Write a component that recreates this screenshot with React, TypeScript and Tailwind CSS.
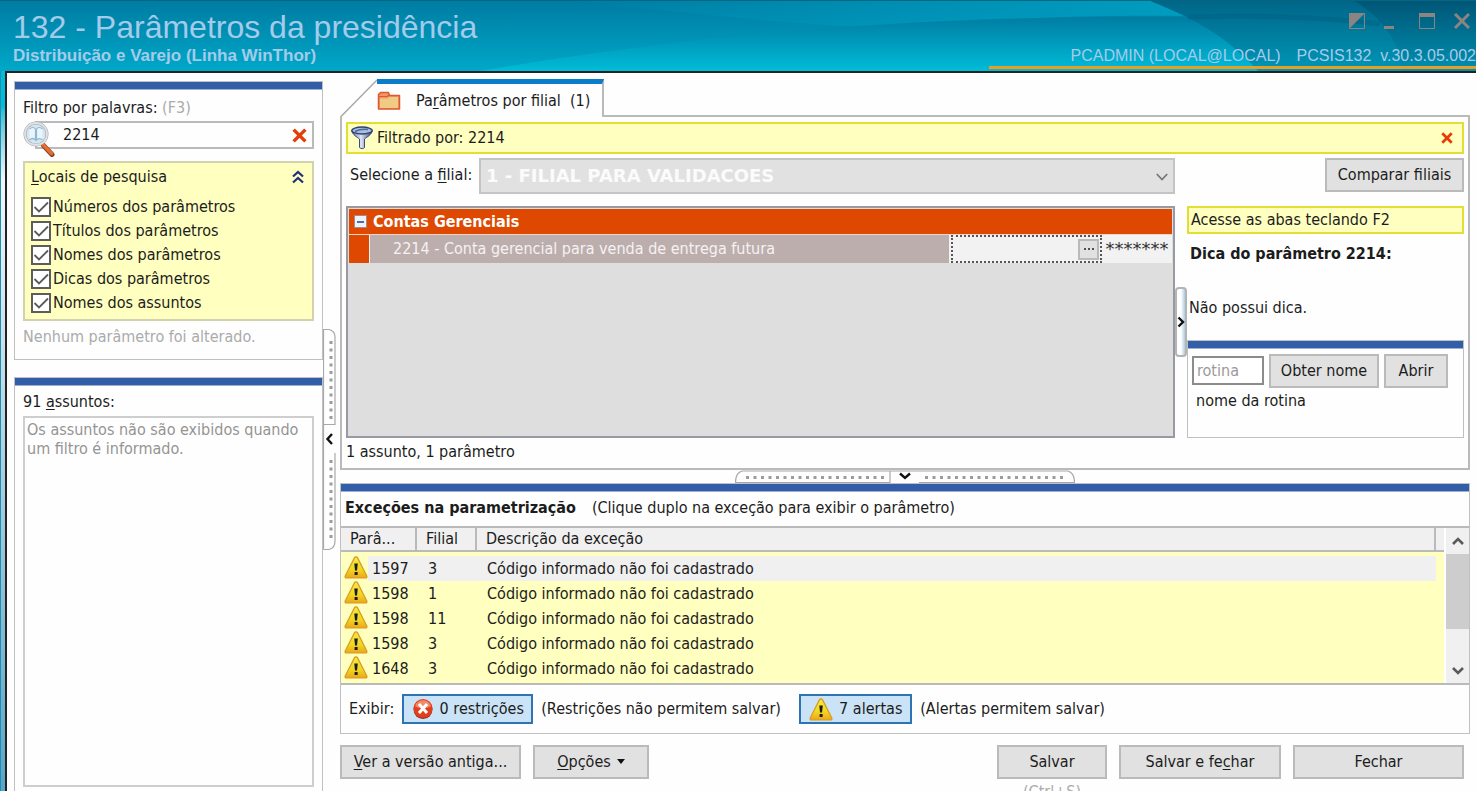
import React from 'react';

const locais = [
  'Números dos parâmetros',
  'Títulos dos parâmetros',
  'Nomes dos parâmetros',
  'Dicas dos parâmetros',
  'Nomes dos assuntos',
];

const excecoes = [
  { parametro: '1597', filial: '3' },
  { parametro: '1598', filial: '1' },
  { parametro: '1598', filial: '11' },
  { parametro: '1598', filial: '3' },
  { parametro: '1648', filial: '3' },
];

const Key: React.FC<{ children: React.ReactNode }> = ({ children }) => (
  <span className="underline underline-offset-2">{children}</span>
);

const Button: React.FC<{ className?: string; children: React.ReactNode }> = ({ className = '', children }) => (
  <button type="button" className={`h-[34px] border-2 border-[#bababa] bg-[#e1e1e1] whitespace-nowrap hover:bg-[#e5f1fb] ${className}`}>
    {children}
  </button>
);

const BlueBar = () => <div className="h-2 shrink-0 border-b border-[#9fb0cc] bg-[#315da9]" />;

const Warning = () => (
  <svg viewBox="0 0 24 23" className="h-[23px] w-6 shrink-0" aria-hidden="true">
    <defs>
      <linearGradient id="warn" x1="0" y1="0" x2="0" y2="1">
        <stop offset="0" stopColor="#f6e84a" />
        <stop offset="0.6" stopColor="#f0d820" />
        <stop offset="1" stopColor="#eda51c" />
      </linearGradient>
    </defs>
    <path d="M12 .8c.7 0 1.200.4 1.600 1.100L22.800 20c.5 1.200 0 2-1.200 2H2.400c-1.200 0-1.700-.8-1.200-2L10.400 1.900c.4-.7.9-1.100 1.600-1.100Z" fill="url(#warn)" stroke="#d89a22" strokeWidth="1.200" />
    <path d="M10.300 7.500h3.500l-.8 7h-2z" fill="#1c1c1c" />
    <rect x="10.600" y="16" width="3" height="3" fill="#1c1c1c" />
  </svg>
);

const RedX: React.FC<{ className: string }> = ({ className }) => (
  <svg viewBox="0 0 14 14" className={className} aria-hidden="true">
    <path d="M1.500 1.500 12.500 12.500M12.500 1.500 1.500 12.500" stroke="#e63c08" strokeWidth="3.200" />
  </svg>
);

const Magnifier = () => (
  <svg viewBox="0 0 34 38" className="absolute -top-[2px] left-0 h-[38px] w-[34px]" aria-hidden="true">
    <path d="M20.500 26.500 29 35.500" stroke="#7a4a2a" strokeWidth="5" strokeLinecap="round" />
    <path d="M20 25.500 28.500 34.500" stroke="#ea6a34" strokeWidth="3.500" strokeLinecap="round" />
    <circle cx="13" cy="15" r="11" fill="#d3e6f2" stroke="#a9abad" strokeWidth="3" />
    <circle cx="13" cy="15" r="11" fill="none" stroke="#dfe1e2" strokeWidth="1.800" />
    <path d="M6.500 10c2-2 4.500-2 6 0v11c-2-2-4-2-6 0M19.500 10c-2-2-4.500-2-6 0v11c2-2 4-2 6 0" fill="#e9f4fb" stroke="#8fb8d2" strokeWidth="1.200" />
  </svg>
);

const Folder = () => (
  <svg viewBox="0 0 24 20" className="h-5 w-6" aria-hidden="true">
    <path d="M1.500 3.500V18h21V4.500H12.500L11.500 1.500H3.500z" fill="#e99a66" stroke="#e4572e" strokeWidth="1.500" strokeLinejoin="round" />
    <path d="M3 7.500h7.500l2-1.500h8.500v11H3z" fill="#f0cb86" />
    <path d="M2 5.500h8l2.500-1.500" fill="none" stroke="#e4572e" strokeWidth="1.200" />
  </svg>
);

const Funnel = () => (
  <svg viewBox="0 0 22 24" className="h-6 w-[22px]" aria-hidden="true">
    <defs>
      <linearGradient id="funnel" x1="0" y1="0" x2="1" y2="0">
        <stop offset="0" stopColor="#5a6a9c" />
        <stop offset="0.450" stopColor="#dfe8f6" />
        <stop offset="1" stopColor="#2c3a70" />
      </linearGradient>
    </defs>
    <path d="M.800 4.500C1 8.500 6 11 8.500 13v8.500c1.500 1.500 4 1.500 5 0V13C16 11 21 8.500 21.200 4.500z" fill="url(#funnel)" stroke="#3c4a80" />
    <ellipse cx="11" cy="4.500" rx="10.200" ry="3.500" fill="#a9bfdc" stroke="#2f3d74" strokeWidth="1.300" />
    <path d="M4 5.500c4-2 9-2.500 13-2" fill="none" stroke="#4c6a9c" strokeWidth="1.500" />
  </svg>
);

const ErrorBadge = () => (
  <svg viewBox="0 0 22 22" className="h-[22px] w-[22px]" aria-hidden="true">
    <circle cx="11" cy="11.500" r="9.500" fill="#8f2a1a" />
    <circle cx="11" cy="10.500" r="9.500" fill="#e2401c" />
    <path d="M3 8a8.500 8.500 0 0 1 16 0c-4 3-12 3-16 0z" fill="#f08a68" />
    <path d="m7 6 8 9M15 6 7 15" stroke="#fff" strokeWidth="3" />
  </svg>
);

const Header = () => (
  <header className="relative flex h-[71px] shrink-0 justify-between overflow-hidden bg-linear-to-b from-[#007ba2] to-[#00a8c8] font-['Liberation_Sans',Arial,sans-serif] text-[#a5cbea]">
    <svg viewBox="0 0 1476 71" preserveAspectRatio="none" className="absolute inset-0 h-full w-full" aria-hidden="true">
      <defs>
        <linearGradient id="band" x1="0" y1="0" x2="0" y2="1">
          <stop offset="0" stopColor="#007ca2" />
          <stop offset="1" stopColor="#00bcd8" />
        </linearGradient>
        <linearGradient id="deep" x1="0" y1="0" x2="0" y2="1">
          <stop offset="0" stopColor="#006588" />
          <stop offset="1" stopColor="#0096b6" />
        </linearGradient>
        <linearGradient id="corner" x1="0" y1="0" x2="0" y2="1">
          <stop offset="0" stopColor="#005576" />
          <stop offset="1" stopColor="#0090b0" />
        </linearGradient>
        <linearGradient id="sheen" x1="0" y1="0" x2="1" y2="0">
          <stop offset="0" stopColor="#009cc0" stopOpacity="0" />
          <stop offset="1" stopColor="#009cc0" />
        </linearGradient>
      </defs>
      <path d="M560 0H1148C1162 5 1178 11 1188 16 1090 15 1010 18 940 25 860 32 760 20 560 0z" fill="url(#sheen)" />
      <path d="M480 71C640 44 860 14 1190 17L1290 71z" fill="url(#band)" />
      <path d="M1148 0C1190 17 1225 34 1258 71H1476V0z" fill="url(#deep)" />
      <path d="M1188 17C1250 15 1320 17 1380 24" fill="none" stroke="#005a7c" strokeWidth="5" strokeOpacity="0.350" />
      <path d="M1353 0C1376 14 1390 30 1398 50L1402 71H1476V0z" fill="url(#corner)" />
      <path d="M0 .5H1476" stroke="#04677f" />
    </svg>
    <div className="relative pt-2 pl-[13px]">
      <h1 className="text-[32px] leading-[38px]">132 - Parâmetros da presidência</h1>
      <p className="text-[17px] leading-5 font-bold">Distribuição e Varejo (Linha WinThor)</p>
    </div>
    <div className="relative flex flex-col items-end">
      <div className="flex h-[42px] items-center gap-[19px] pr-[6px] text-[#8b8480]">
        <button type="button" aria-label="Recolher">
          <svg viewBox="0 0 16 16" className="h-4 w-4"><path d="M.5.500h15v15H.5z" fill="none" stroke="currentColor" /><path d="M0 0h16L0 16z" fill="currentColor" /></svg>
        </button>
        <button type="button" aria-label="Minimizar">
          <svg viewBox="0 0 16 16" className="h-4 w-4"><path d="M0 14.500h10" stroke="currentColor" strokeWidth="3" /></svg>
        </button>
        <button type="button" aria-label="Maximizar">
          <svg viewBox="0 0 16 16" className="h-4 w-4"><path d="M.5 1h15v14.500H.5z" fill="none" stroke="currentColor" /><path d="M0 2h16" stroke="currentColor" strokeWidth="4" /></svg>
        </button>
        <button type="button" aria-label="Fechar janela">
          <svg viewBox="0 0 16 16" className="h-4 w-4"><path d="m1 1 14 14M15 1 1 15" stroke="currentColor" strokeWidth="3" /></svg>
        </button>
      </div>
      <div className="flex h-[27px] w-[487px] items-end justify-end gap-4 border-b-3 border-[#eb9c22] text-base leading-5">
        <span>PCADMIN (LOCAL@LOCAL)</span>
        <span>PCSIS132&nbsp; v.30.3.05.002</span>
      </div>
    </div>
  </header>
);

const Sidebar = () => (
  <aside className="flex w-[309px] shrink-0 flex-col gap-[17px]">
    <section className="shrink-0 border border-[#c0c0c0]">
      <BlueBar />
      <div className="px-2 pt-2 pb-3">
        <label htmlFor="filtro" className="block leading-5">
          Filtro por palavras: <span className="text-[#ababab]">(F3)</span>
        </label>
        <div className="relative mt-[3px] pl-3">
          <div className="flex h-7 items-center border-2 border-[#bababa] pr-[5px]">
            <input id="filtro" defaultValue="2214" className="min-w-0 flex-1 pl-[26px] outline-none" />
            <button type="button" aria-label="Limpar filtro"><RedX className="h-[15px] w-[15px]" /></button>
          </div>
          <Magnifier />
        </div>
        <fieldset className="mt-3 border-2 border-[#d2d2b0] bg-[#ffffc0] px-[6px] pt-1 pb-1">
          <div className="flex h-5 items-center justify-between pr-[1px]">
            <span><Key>L</Key>ocais de pesquisa</span>
            <button type="button" aria-label="Recolher locais">
              <svg viewBox="0 0 14 14" className="h-[14px] w-[14px]"><path d="m2 6.500 5-4.500 5 4.500M2 12.500 7 8l5 4.500" fill="none" stroke="#1f2f78" strokeWidth="2.200" /></svg>
            </button>
          </div>
          <div className="mt-2">
            {locais.map((local) => (
              <label key={local} className="flex h-6 items-center gap-[2px]">
                <span className="relative flex">
                  <input type="checkbox" defaultChecked className="peer h-5 w-5 appearance-none border-2 border-[#5c5c5c] bg-white" />
                  <svg viewBox="0 0 20 20" className="pointer-events-none absolute inset-0 hidden h-5 w-5 peer-checked:block"><path d="m3.500 10 4.500 4.500 9-9" fill="none" stroke="#5a5a5a" strokeWidth="1.800" /></svg>
                </span>
                {local}
              </label>
            ))}
          </div>
        </fieldset>
        <p className="mt-[6px] leading-5 text-[#ababab]">Nenhum parâmetro foi alterado.</p>
      </div>
    </section>
    <section className="flex flex-1 flex-col border border-b-0 border-[#c0c0c0]">
      <BlueBar />
      <div className="flex flex-1 flex-col px-2 pt-[6px] pb-1">
        <h2 className="leading-5">91 <Key>a</Key>ssuntos:</h2>
        <p className="mt-1 flex-1 border-2 border-[#cecece] px-[2px] pt-[2px] leading-[19px] text-[#949494]">
          Os assuntos não são exibidos quando um filtro é informado.
        </p>
      </div>
    </section>
  </aside>
);

const SideSplitter = () => (
  <div className="flex w-[17px] shrink-0 flex-col justify-center pt-[6px]">
    <button type="button" aria-label="Recolher painel lateral">
      <svg viewBox="0 0 17 221" className="h-[221px] w-[17px]">
        <path d="M.5 220.500V.5H6Q12 2 12 8V95.500H1M12 124V212Q12 219 6 220.500H.5" fill="none" stroke="#a8a8a8" strokeWidth="1.200" />
        <path d="M8 12V93M8 131V210" stroke="#9c9c9c" strokeWidth="3" strokeDasharray="3 4.500" />
        <path d="M9 105 4.500 110l4.500 5" fill="none" stroke="#111" strokeWidth="2.400" />
      </svg>
    </button>
  </div>
);

const Tab = () => (
  <div className="flex h-[38px] items-stretch">
    <svg viewBox="0 0 37 38" className="h-[38px] w-[37px]" aria-hidden="true"><path d="M.5 38 L37 1" fill="none" stroke="#a8a8a8" strokeWidth="1.500" /></svg>
    <a href="#filial" className="flex items-center gap-[15px] border-t-5 border-r-2 border-t-[#0a7dca] border-r-[#bababa] pr-3 whitespace-nowrap">
      <Folder />
      <span>Pa<Key>r</Key>âmetros por filial &nbsp;(1)</span>
    </a>
    <div className="flex-1 border-b-2 border-[#bababa]" />
  </div>
);

const ParametroGrid = () => (
  <div className="flex-1 border-2 border-[#979aa3] bg-[#dedede] p-px">
    <div className="flex h-[26px] items-center gap-[6px] border-b border-[#f3d4c4] bg-[#de4800] pl-[5px] font-bold text-white">
      <button type="button" aria-label="Recolher grupo" className="flex h-[13px] w-[13px] items-center border border-[#a88] bg-[#eef2fa] px-[2px]">
        <span className="h-[2px] flex-1 bg-[#4a6ea8]" />
      </button>
      Contas Gerenciais
    </div>
    <div className="flex h-7 bg-[#f2f2f2]">
      <div className="w-5 bg-[#de4800]" />
      <div className="ml-px flex flex-1 items-center bg-[#bdaeae] pl-[23px] text-[#f6f2f2]">2214 - Conta gerencial para venda de entrega futura</div>
      <div className="ml-[2px] flex w-[151px] items-center border-2 border-dotted border-[#555] pr-[1px]">
        <input aria-label="Conta gerencial" className="h-5 min-w-0 flex-1 bg-transparent px-1 outline-none" />
        <button type="button" aria-label="Procurar conta" className="flex h-[21px] w-[21px] items-center justify-center border-2 border-[#bababa] bg-[#e1e1e1]">
          <svg viewBox="0 0 12 4" className="h-1 w-3"><path d="M1 2h2M5 2h2M9 2h2" stroke="#222" strokeWidth="1.500" /></svg>
        </button>
      </div>
      <div className="flex w-[70px] items-center justify-center font-['DejaVu_Sans',sans-serif] text-lg text-[#333]">*******</div>
    </div>
  </div>
);

const Dica = () => (
  <div className="flex w-[277px] shrink-0 flex-col">
    <p className="flex h-7 items-center border-2 border-[#e2de34] bg-[#ffffc0] pl-[2px]">Acesse as abas teclando F2</p>
    <h2 className="mt-[10px] pl-[3px] leading-5 font-bold">Dica do parâmetro 2214:</h2>
    <p className="mt-[34px] pl-[2px] leading-5">Não possui dica.</p>
    <section className="mt-auto h-[98px] border border-[#c0c0c0]">
      <BlueBar />
      <div className="flex gap-[5px] px-1 pt-[5px]">
        <input aria-label="Rotina" placeholder="rotina" className="mt-[2px] h-[29px] w-[72px] border-2 border-[#8c8c8c] bg-white px-[3px] outline-none placeholder:text-[#9a9a9a]" />
        <Button className="w-[110px]">Obter nome</Button>
        <Button className="w-16">Abrir</Button>
      </div>
      <p className="mt-[3px] pl-2 leading-5">nome da rotina</p>
    </section>
  </div>
);

const FilialPanel = () => (
  <section id="filial" className="flex h-[353px] shrink-0 flex-col border-2 border-t-0 border-[#bababa] px-[4px] pt-[5px]">
    <div className="flex h-8 shrink-0 items-center gap-1 border-2 border-[#e2de34] bg-[#ffffc0] pr-[9px] pl-[3px]">
      <Funnel />
      <span className="flex-1">Filtrado por: 2214</span>
      <button type="button" aria-label="Remover filtro"><RedX className="h-3 w-3" /></button>
    </div>
    <div className="mt-[4px] flex items-start">
      <div className="flex flex-1">
        <label htmlFor="sel-filial" className="w-[133px] pt-[7px] pl-1 leading-5">Selecione a <Key>f</Key>ilial:</label>
        <div className="relative flex-1">
          <select id="sel-filial" disabled className="h-9 w-full appearance-none border-2 border-[#c4c4c4] bg-[#e1e1e1] pl-[5px] font-['DejaVu_Sans',sans-serif] text-lg font-bold text-[#fbfbfb] disabled:opacity-100">
            <option>1 - FILIAL PARA VALIDACOES</option>
          </select>
          <svg viewBox="0 0 12 8" className="pointer-events-none absolute top-[15px] right-[7px] h-2 w-3"><path d="m.8 1 5.200 5.500L11.200 1" fill="none" stroke="#777" strokeWidth="1.800" /></svg>
        </div>
      </div>
      <div className="flex w-[289px] justify-end">
        <Button className="w-[139px]">Comparar filiais</Button>
      </div>
    </div>
    <div className="mt-3 flex flex-1">
      <ParametroGrid />
      <button type="button" aria-label="Recolher dica" className="flex h-[70px] w-3 items-center self-center rounded-sm border-2 border-[#b4b4b4] bg-linear-to-r from-white from-50% to-[#a9cde4]">
        <svg viewBox="0 0 8 12" className="h-3 w-2"><path d="m1.500 1.500 4.500 4.500-4.500 4.500" fill="none" stroke="#111" strokeWidth="2.400" /></svg>
      </button>
      <Dica />
    </div>
    <p className="pt-1 pb-[6px] leading-5">1 assunto, 1 parâmetro</p>
  </section>
);

const BottomSplitter = () => (
  <div className="flex h-[13px] shrink-0 justify-center">
    <button type="button" aria-label="Recolher exceções" className="h-[13px]">
      <svg viewBox="0 0 340 13" className="h-[13px] w-[340px]">
        <path d="M7 1H333Q339.500 3 339.500 12.500H184M155 1V12.500H.5Q.5 3 7 1" fill="none" stroke="#a8a8a8" strokeWidth="1.200" />
        <path d="M11 7.500H152M190 7.500H330" stroke="#9c9c9c" strokeWidth="3" strokeDasharray="3 4.500" />
        <path d="m165 3.500 5 4.500 5-4.500" fill="none" stroke="#111" strokeWidth="2.400" />
      </svg>
    </button>
  </div>
);

const th = 'h-6 border-r-2 border-b-2 border-[#bababa] p-0 pl-[9px] text-left leading-[22px] font-normal whitespace-nowrap';

const Excecoes = () => (
  <section className="shrink-0 border border-[#c0c0c0]">
    <BlueBar />
    <div className="flex h-[34px] items-start gap-4 pt-1 pl-1">
      <h2 className="font-bold">Exceções na parametrização</h2>
      <span>(Clique duplo na exceção para exibir o parâmetro)</span>
    </div>
    <div className="flex h-[159px] border-y-2 border-[#bababa]">
      <div className="flex-1 overflow-hidden border-r-2 border-white bg-[#ffffc0]">
        <table className="w-full table-fixed border-separate border-spacing-0">
          <colgroup>
            <col className="w-[27px]" />
            <col className="w-[49px]" />
            <col className="w-[60px]" />
            <col />
            <col className="w-[8px]" />
          </colgroup>
          <thead className="bg-[#f0f0f0]">
            <tr>
              <th colSpan={2} className={th}>Parâ...</th>
              <th className={th}>Filial</th>
              <th className={th}>Descrição da exceção</th>
              <th aria-label="Ajuste" className="border-b-2 border-[#bababa]" />
            </tr>
          </thead>
          <tbody className="before:block before:h-1 before:content-['']">
            {excecoes.map((e, i) => {
              const cell = i === 0 ? 'h-[25px] bg-[#f0f0f0] p-0' : 'h-[25px] p-0';
              return (
                <tr key={i}>
                  <td className="p-0 pl-[3px] align-top"><Warning /></td>
                  <td className={`${cell} pl-1`}>{e.parametro}</td>
                  <td className={`${cell} pl-[11px]`}>{e.filial}</td>
                  <td className={`${cell} pl-[10px]`}>Código informado não foi cadastrado</td>
                  <td />
                </tr>
              );
            })}
          </tbody>
        </table>
      </div>
      <div className="flex w-[23px] flex-col items-center bg-[#f0f0f0]">
        <svg viewBox="0 0 12 8" className="my-[9px] h-2 w-3"><path d="m1 7 5-5 5 5" fill="none" stroke="#5a5a5a" strokeWidth="2.600" /></svg>
        <div className="h-[75px] w-full bg-[#cdcdcd]" />
        <svg viewBox="0 0 12 8" className="mt-auto mb-2 h-2 w-3"><path d="m1 1 5 5 5-5" fill="none" stroke="#5a5a5a" strokeWidth="2.600" /></svg>
      </div>
    </div>
    <div className="flex h-12 items-center gap-2 pl-2">
      <span>Exibir:</span>
      <button type="button" aria-pressed="true" className="flex h-[30px] w-[131px] items-center justify-center gap-[6px] border-2 border-[#2c74b4] bg-[#cbe3f6]">
        <ErrorBadge />
        0 restrições
      </button>
      <span className="w-[250px]">(Restrições não permitem salvar)</span>
      <button type="button" aria-pressed="true" className="flex h-[30px] w-[113px] items-center justify-center gap-[6px] border-2 border-[#2c74b4] bg-[#cbe3f6]">
        <Warning />
        7 alertas
      </button>
      <span>(Alertas permitem salvar)</span>
    </div>
  </section>
);

const Actions = () => (
  <footer className="flex shrink-0 items-start justify-between pt-[11px] pr-[6px]">
    <div className="flex gap-3">
      <Button className="w-[181px]"><Key>V</Key>er a versão antiga...</Button>
      <Button className="w-[116px]">
        <Key>O</Key>pções
        <svg viewBox="0 0 8 5" className="mb-[2px] ml-[6px] inline h-[5px] w-2"><path d="M0 0h8L4 5z" fill="#111" /></svg>
      </Button>
    </div>
    <div className="flex gap-3">
      <div className="flex flex-col items-center">
        <Button className="w-[110px]">Salvar</Button>
        <span className="mt-[3px] leading-5 text-[#ababab]">(Ctrl+S)</span>
      </div>
      <Button className="w-[162px]">Salvar e fe<Key>c</Key>har</Button>
      <Button className="w-[171px]">Fechar</Button>
    </div>
  </footer>
);

const App: React.FC = () => {
  return (
    <div className="flex h-screen flex-col overflow-hidden bg-[#fefefe] font-['DejaVu_Sans_Condensed','DejaVu_Sans',sans-serif] text-base text-[#1c1c1c]">
      <Header />
      <div className="flex min-h-0 flex-1">
        <div className="w-[5px] border-l border-[#1c90ac] bg-linear-to-b from-[#00bcd8] from-5% via-[#f0f6fa] via-15% to-[#5aa4c8]" />
        <div className="flex min-w-0 flex-1 border-t-2 border-l-2 border-[#222] pt-2 pl-[7px]">
          <Sidebar />
          <SideSplitter />
          <main className="flex min-w-0 flex-1 flex-col pr-[6px]">
            <div className="-mt-[2px]"><Tab /></div>
            <FilialPanel />
            <BottomSplitter />
            <Excecoes />
            <Actions />
          </main>
        </div>
      </div>
    </div>
  );
};

export default App;
